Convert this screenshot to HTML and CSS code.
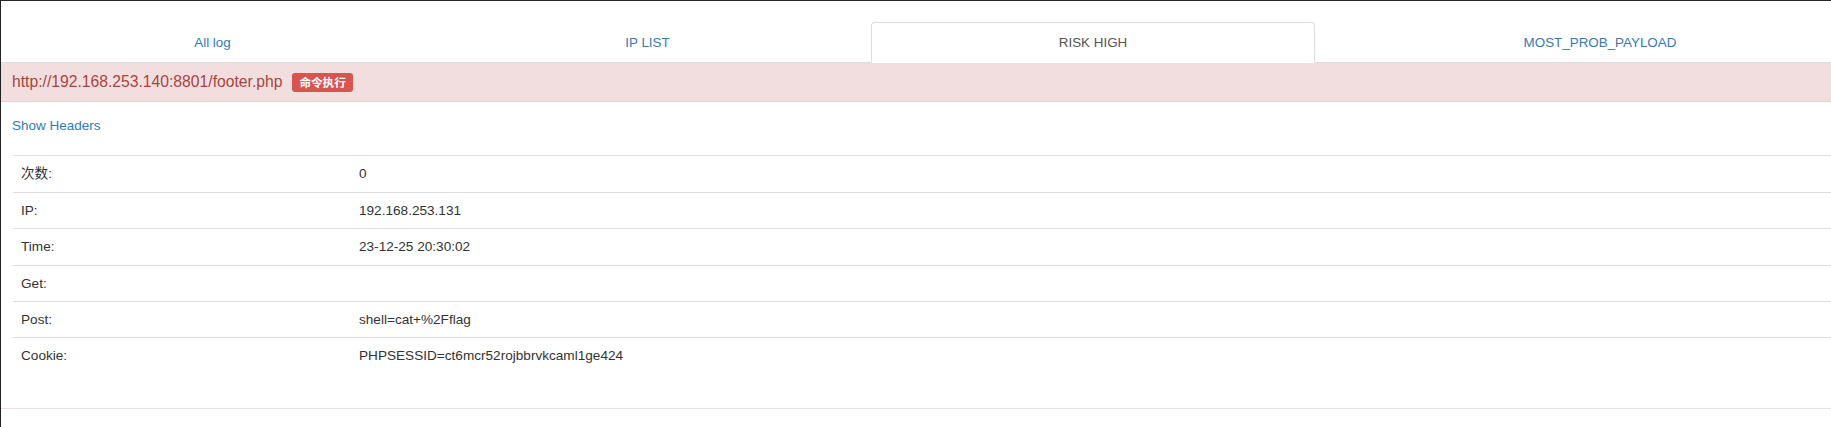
FILE: index.html
```html
<!DOCTYPE html>
<html>
<head>
<meta charset="utf-8">
<link rel="stylesheet" href="styles.css">
</head>
<body>
<div class="frame">
  <ul class="tabs">
    <li class="tab tab-1"><a>All log</a></li>
    <li class="tab tab-2"><a>IP LIST</a></li>
    <li class="tab tab-3 active"><a>RISK HIGH</a></li>
    <li class="tab tab-4"><a>MOST_PROB_PAYLOAD</a></li>
  </ul>
  <div class="panel">
    <div class="panel-heading">
      <span class="url">http://192.168.253.140:8801/footer.php</span>
      <span class="badge">命令执行</span>
    </div>
    <div class="panel-body">
      <a class="show-headers">Show Headers</a>
      <table class="info">
        <tr><td class="key">次数:</td><td>0</td></tr>
        <tr><td class="key">IP:</td><td>192.168.253.131</td></tr>
        <tr><td class="key">Time:</td><td>23-12-25 20:30:02</td></tr>
        <tr><td class="key">Get:</td><td></td></tr>
        <tr><td class="key">Post:</td><td>shell=cat+%2Fflag</td></tr>
        <tr><td class="key">Cookie:</td><td>PHPSESSID=ct6mcr52rojbbrvkcaml1ge424</td></tr>
      </table>
    </div>
  </div>
</div>
</body>
</html>
```

FILE: styles.css
```css
html, body {
  margin: 0;
  padding: 0;
  background: #fff;
  overflow: hidden;
}

body {
  font-family: "Liberation Sans", Arial, "Noto Sans CJK SC", sans-serif;
  font-size: 13.6px;
  line-height: 19.4px;
  color: #333;
}

.frame {
  height: 426px;
  border-top: 1px solid #2a2520;
  border-left: 1px solid #222;
  overflow: hidden;
}

.tabs {
  list-style: none;
  margin: 0;
  padding: 21px 0 0 0;
  display: flex;
  border-bottom: 1px solid #ddd;
}

.tab {
  flex: 0 0 auto;
  margin-bottom: -1px;
}

.tab-1 { width: 423px; }
.tab-2 { width: 447px; }
.tab-3 { width: 444px; }
.tab-4 { width: 570px; }

.tab a {
  display: block;
  box-sizing: border-box;
  height: 41px;
  padding: 10px 0;
  text-align: center;
  font-size: 13.4px;
  line-height: 19px;
  color: #337ab7;
  border: 1px solid transparent;
  border-radius: 4px 4px 0 0;
}

.tab.active a {
  color: #555;
  background: #fff;
  border-color: #ddd #ddd transparent #ddd;
}

.panel {
  border-bottom: 1px solid #f2dde0;
}

.panel-heading {
  height: 38px;
  display: flex;
  align-items: center;
  padding-left: 11px;
  background: #f2dede;
  border-bottom: 1px solid #ebccd1;
  color: #a94442;
}

.url {
  font-size: 15.7px;
}

.badge {
  margin-left: 10px;
  padding: 3px 7px 3px;
  font-size: 11.6px;
  line-height: 13px;
  font-weight: bold;
  color: #fff;
  background: #d9534f;
  border-radius: 3px;
  font-family: "Noto Sans CJK SC", sans-serif;
}

.panel-body {
  padding: 14px 0 14px 11px;
}

.show-headers {
  display: block;
  color: #337ab7;
  margin-bottom: 20px;
  font-size: 13.5px;
}

.info {
  width: 100%;
  border-collapse: collapse;
  margin: 0 0 20px 1px;
}

.info td {
  padding: 8px;
  border-top: 1px solid #ddd;
  vertical-align: top;
  height: 19.4px;
}

.info td.key {
  width: 322px;
}
```
